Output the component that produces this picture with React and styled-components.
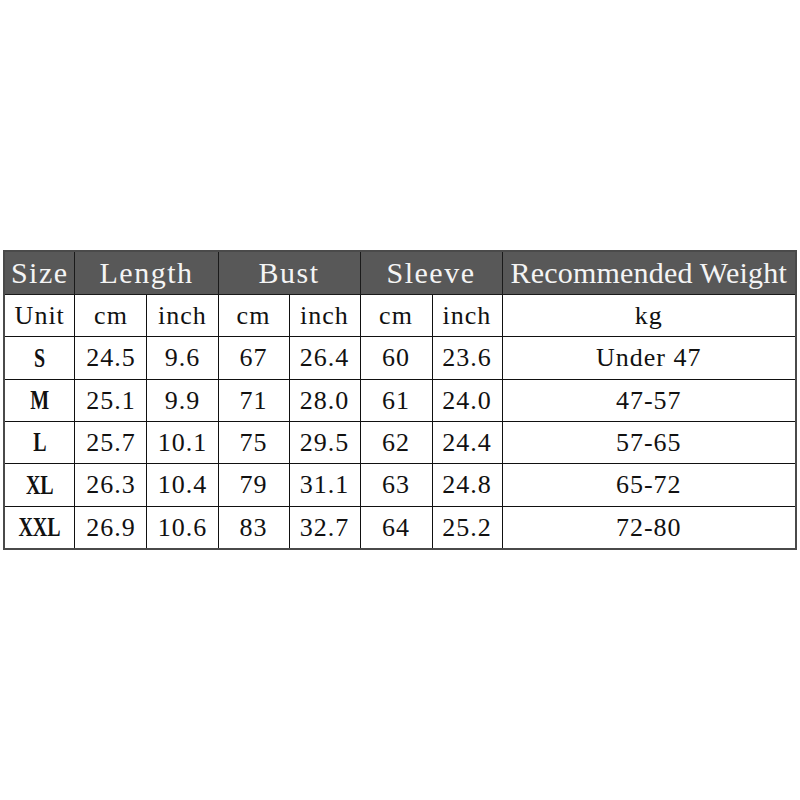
import React from "react";
import styled, { createGlobalStyle } from "styled-components";

const Global = createGlobalStyle`
  html, body { margin: 0; padding: 0; background: #fff; }
  body { font-family: "Liberation Serif", "Noto Sans CJK SC", serif; }
`;

const Page = styled.div`
  width: 800px;
  height: 800px;
  display: flex;
  align-items: center;
  justify-content: center;
`;

const Table = styled.table`
  border-collapse: collapse;
  table-layout: fixed;
  width: 792px;
  border: 2px solid #4a4a4a;
  color: #111;
`;

const HeadCell = styled.th`
  background: #585858;
  color: #f4f4f4;
  font-weight: normal;
  font-size: 30px;
  letter-spacing: ${(p) => (p.$tight ? "0.2px" : "1.5px")};
  height: 42px;
  padding: 0;
  text-align: center;
  border: 1px solid #1a1a1a;
  white-space: nowrap;
  overflow: hidden;
`;

const Row = styled.tr`
  height: ${(p) => p.$h}px;
`;

const Cell = styled.td`
  font-size: 26px;
  letter-spacing: 1px;
  padding: 0;
  text-align: center;
  border: 1px solid #111;
  white-space: nowrap;
`;

const SizeCell = styled(Cell)`
  font-size: 27px;
  font-weight: bold;
  letter-spacing: 0;
`;

const Narrow = styled.span`
  display: inline-block;
  transform: scaleX(0.74);
`;

const widths = [71, 72, 71, 71, 71, 72, 70, 294];

const rows = [
  ["S", "24.5", "9.6", "67", "26.4", "60", "23.6", "Under 47"],
  ["M", "25.1", "9.9", "71", "28.0", "61", "24.0", "47-57"],
  ["L", "25.7", "10.1", "75", "29.5", "62", "24.4", "57-65"],
  ["XL", "26.3", "10.4", "79", "31.1", "63", "24.8", "65-72"],
  ["XXL", "26.9", "10.6", "83", "32.7", "64", "25.2", "72-80"],
];
const heights = [43, 42, 42, 43, 42];

export default function App() {
  return (
    <>
      <Global />
      <Page>
        <Table>
          <colgroup>
            {widths.map((w, i) => (
              <col key={i} style={{ width: w }} />
            ))}
          </colgroup>
          <thead>
            <Row $h={43}>
              <HeadCell>Size</HeadCell>
              <HeadCell colSpan={2}>Length</HeadCell>
              <HeadCell colSpan={2}>Bust</HeadCell>
              <HeadCell colSpan={2}>Sleeve</HeadCell>
              <HeadCell $tight>Recommended Weight</HeadCell>
            </Row>
          </thead>
          <tbody>
            <Row $h={42}>
              <Cell>Unit</Cell>
              <Cell>cm</Cell>
              <Cell>inch</Cell>
              <Cell>cm</Cell>
              <Cell>inch</Cell>
              <Cell>cm</Cell>
              <Cell>inch</Cell>
              <Cell>kg</Cell>
            </Row>
            {rows.map((r, i) => (
              <Row key={r[0]} $h={heights[i]}>
                <SizeCell>
                  <Narrow>{r[0]}</Narrow>
                </SizeCell>
                {r.slice(1).map((v, j) => (
                  <Cell key={j}>{v}</Cell>
                ))}
              </Row>
            ))}
          </tbody>
        </Table>
      </Page>
    </>
  );
}
